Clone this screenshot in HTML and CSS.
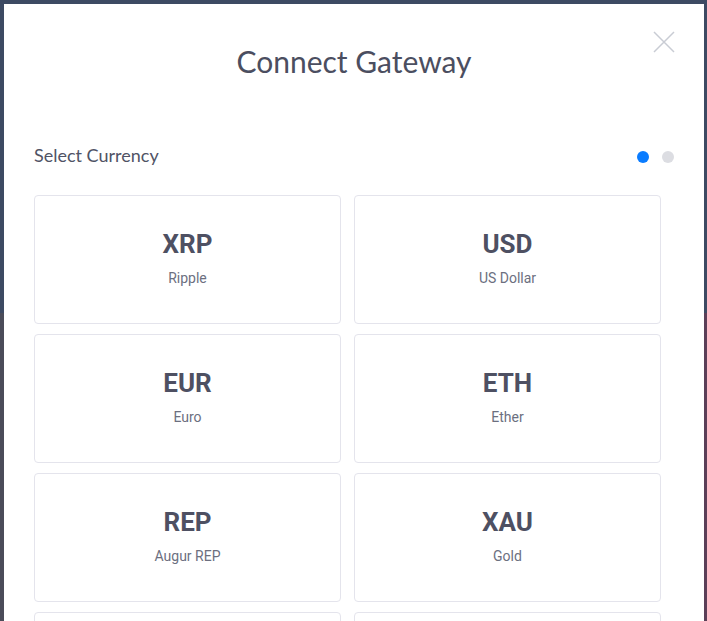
FILE: index.html
```html
<!DOCTYPE html>
<html>
<head>
<meta charset="utf-8">
<link rel="stylesheet" href="styles.css">
</head>
<body>
<div class="modal">
  <button class="close" aria-label="Close">
    <svg width="22" height="22" viewBox="0 0 22 22"><path d="M1 1 L21 21 M21 1 L1 21" stroke="#c9ccd4" stroke-width="1.5" fill="none"/></svg>
  </button>
  <h1 class="title">Connect Gateway</h1>
  <div class="step-row">
    <div class="label">Select Currency</div>
    <div class="dots"><span class="dot active"></span><span class="dot"></span></div>
  </div>
  <div class="grid">
    <div class="card"><div class="code">XRP</div><div class="name">Ripple</div></div>
    <div class="card"><div class="code">USD</div><div class="name">US Dollar</div></div>
    <div class="card"><div class="code">EUR</div><div class="name">Euro</div></div>
    <div class="card"><div class="code">ETH</div><div class="name">Ether</div></div>
    <div class="card"><div class="code">REP</div><div class="name">Augur REP</div></div>
    <div class="card"><div class="code">XAU</div><div class="name">Gold</div></div>
    <div class="card"></div>
    <div class="card"></div>
  </div>
</div>
</body>
</html>
```
FILE: styles.css
```css
html, body {
  margin: 0;
  padding: 0;
  height: 100%;
  overflow: hidden;
}
body {
  background:
    linear-gradient(to bottom, #3d4a63 0, #3d4a63 313px, transparent 313px),
    linear-gradient(to right, #4b4c59 50%, #5b3f58 50%);
  padding: 4px 3px 0 4px;
  box-sizing: border-box;
}
.modal {
  position: relative;
  background: #ffffff;
  height: 100%;
  padding: 39px 43px 0 30px;
  box-sizing: border-box;
  overflow: hidden;
}
.close {
  position: absolute;
  top: 27px;
  right: 29px;
  background: none;
  border: 0;
  padding: 0;
  width: 22px;
  height: 22px;
  cursor: pointer;
}
.close svg { display: block; }
.title {
  margin: 0 0 0 13px;
  font-family: Lato, "Liberation Sans", sans-serif;
  font-weight: 400;
  font-size: 30px;
  line-height: 36px;
  color: #4b4e60;
  text-align: center;
}
.step-row {
  display: flex;
  justify-content: space-between;
  align-items: flex-start;
  margin-top: 65px;
  margin-right: -13px;
}
.label {
  font-family: Lato, "Liberation Sans", sans-serif;
  font-size: 18px;
  line-height: 22px;
  color: #505365;
}
.dots {
  display: flex;
  gap: 13px;
  padding-top: 7px;
}
.dot {
  width: 12px;
  height: 12px;
  border-radius: 50%;
  background: #dcdde2;
}
.dot.active { background: #0a7cff; }
.grid {
  display: grid;
  grid-template-columns: 307px 307px;
  column-gap: 13px;
  row-gap: 10px;
  margin-top: 29px;
}
.card {
  height: 129px;
  box-sizing: border-box;
  border: 1px solid #e4e4ec;
  border-radius: 4px;
  padding-top: 33px;
  text-align: center;
  font-family: Roboto, "Liberation Sans", sans-serif;
}
.code {
  font-weight: 700;
  font-size: 26px;
  line-height: 30px;
  color: #4e5062;
}
.name {
  margin-top: 10px;
  font-size: 14px;
  line-height: 18px;
  color: #6c6f7f;
}
```
